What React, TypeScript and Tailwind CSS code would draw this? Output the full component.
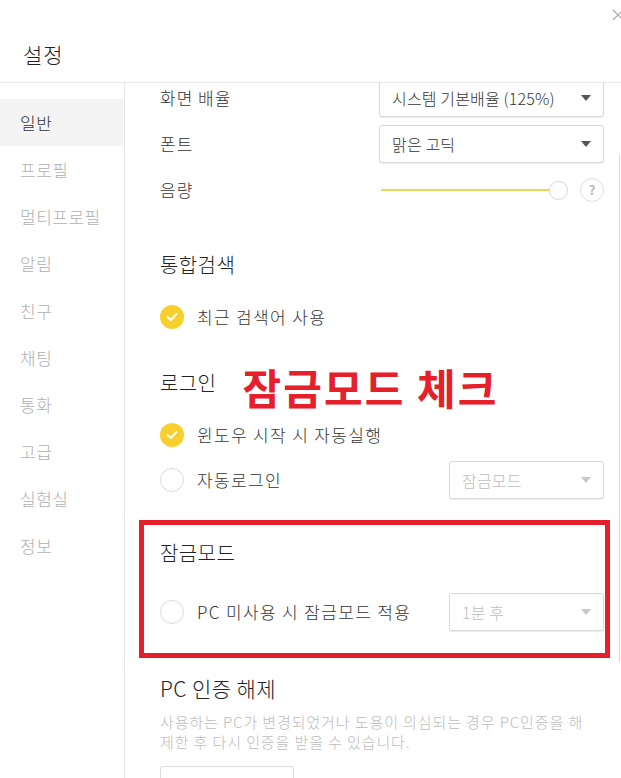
import React from "react";

const menu = ["일반", "프로필", "멀티프로필", "알림", "친구", "채팅", "통화", "고급", "실험실", "정보"];

function Caret({ disabled }: { disabled?: boolean }) {
  return (
    <svg width="10" height="6" viewBox="0 0 10 6" className="shrink-0">
      <path d="M0 0 L10 0 L5 6 Z" fill={disabled ? "#c8c8c8" : "#555"} />
    </svg>
  );
}

function Select({ value, width, disabled }: { value: string; width: string; disabled?: boolean }) {
  return (
    <div
      className={`${width} h-[38px] flex items-center justify-between pl-3 pr-[12px] border border-[#d9d9d9] rounded-[3px] bg-white shadow-[0_1px_1px_rgba(0,0,0,0.08)]`}
    >
      <span className={`text-[16px] font-light tracking-[0.01em] ${disabled ? "text-[#bdbdbd]" : "text-[#333]"}`}>{value}</span>
      <Caret disabled={disabled} />
    </div>
  );
}

function Check({ checked, label }: { checked: boolean; label: string }) {
  return (
    <div className="flex items-center gap-[13px]">
      {checked ? (
        <span className="w-[24px] h-[24px] rounded-full bg-[#f9cf2d] flex items-center justify-center">
          <svg width="12" height="10" viewBox="0 0 12 10">
            <path d="M1.5 5 L4.8 8 L10.5 2" stroke="#fff" strokeWidth="2" fill="none" strokeLinecap="round" strokeLinejoin="round" />
          </svg>
        </span>
      ) : (
        <span className="w-[24px] h-[24px] rounded-full border border-[#dcdcdc] bg-white" />
      )}
      <span className="text-[17px] font-light tracking-[0.08em] text-[#333]">{label}</span>
    </div>
  );
}

export default function App() {
  return (
    <div
      className="relative w-[621px] h-[778px] bg-white overflow-hidden flex flex-col"
      style={{ fontFamily: '"Noto Sans CJK KR", "Noto Sans", sans-serif' }}
    >
      {/* header */}
      <div className="h-[83px] shrink-0 border-b border-[#e6e6e6] flex items-end pb-[14px] pl-[23px]">
        <h1 className="text-[21px] font-light leading-[28px] tracking-[0.04em] text-[#222]">설정</h1>
      </div>
      <svg width="12" height="12" viewBox="0 0 12 12" className="absolute top-[9px] left-[612px]">
        <path d="M1 1 L11 11 M11 1 L1 11" stroke="#a8a8a8" strokeWidth="1.2" />
      </svg>

      <div className="flex flex-1 min-h-0">
        {/* sidebar */}
        <aside className="w-[125px] shrink-0 border-r border-[#e6e6e6] pt-[16px]">
          {menu.map((m, i) => (
            <div
              key={m}
              className={`h-[47px] flex items-center pl-[20px] text-[17px] font-light tracking-[0.03em] ${
                i === 0 ? "bg-[#f4f4f4] text-[#333]" : "text-[#b0b0b0]"
              }`}
            >
              {m}
            </div>
          ))}
        </aside>

        {/* content */}
        <main className="relative flex-1 overflow-hidden pl-[35px] pr-[17px]">
          <div className="-mt-[4px]">
            <div className="h-[38px] flex items-center justify-between">
              <span className="text-[17px] font-light tracking-[0.06em] text-[#333]">화면 배율</span>
              <Select value="시스템 기본배율 (125%)" width="w-[225px]" />
            </div>
            <div className="mt-[8px] h-[38px] flex items-center justify-between">
              <span className="text-[17px] font-light tracking-[0.06em] text-[#333]">폰트</span>
              <Select value="맑은 고딕" width="w-[225px]" />
            </div>
            <div className="mt-[8px] h-[38px] flex items-center justify-between">
              <span className="text-[17px] font-light tracking-[0.06em] text-[#333]">음량</span>
              <div className="w-[223px] flex items-center">
                <div className="flex-1 h-[2px] bg-[#f0d45c]" />
                <span className="w-[19px] h-[19px] rounded-full border border-[#d6d6d6] bg-white" />
                <span className="ml-[12px] w-[24px] h-[24px] rounded-full border border-[#e0e0e0] flex items-center justify-center text-[13px] font-bold text-[#b8b8b8]">
                  ?
                </span>
              </div>
            </div>

            <h2 className="mt-[42px] text-[20px] font-light leading-[28px] tracking-[0.02em] text-[#222]">통합검색</h2>
            <div className="mt-[19px] h-[38px] flex items-center">
              <Check checked label="최근 검색어 사용" />
            </div>

            <div className="mt-[33px] h-[28px] flex items-center">
              <h2 className="text-[20px] font-light leading-[28px] tracking-[0.02em] text-[#222]">로그인</h2>
              <span className="ml-[26px] text-[42px] leading-none font-bold tracking-[0.05em] text-[#e5202b] mt-[8px]">
                잠금모드 체크
              </span>
            </div>
            <div className="mt-[19px] h-[38px] flex items-center">
              <Check checked label="윈도우 시작 시 자동실행" />
            </div>
            <div className="mt-[7px] h-[38px] flex items-center justify-between">
              <Check checked={false} label="자동로그인" />
              <Select value="잠금모드" width="w-[155px]" disabled />
            </div>

            <section className="mt-[21px] -ml-[21px] -mr-[6px] border-[5px] border-[#e5202b] pl-[16px] pr-[1px] pt-[14px] pb-[22px]">
              <h2 className="text-[20px] font-light leading-[28px] tracking-[0.02em] text-[#222]">잠금모드</h2>
              <div className="mt-[26px] h-[38px] flex items-center justify-between">
                <Check checked={false} label="PC 미사용 시 잠금모드 적용" />
                <Select value="1분 후" width="w-[155px]" disabled />
              </div>
            </section>

            <h2 className="mt-[16px] text-[21px] font-light leading-[28px] tracking-[0.02em] text-[#222]">PC 인증 해제</h2>
            <p className="mt-[10px] text-[15px] font-light leading-[20px] tracking-[0.06em] text-[#bcbcbc]">
              사용하는 PC가 변경되었거나 도용이 의심되는 경우 PC인증을 해
              <br />
              제한 후 다시 인증을 받을 수 있습니다.
            </p>
            <button className="mt-[14px] w-[134px] h-[40px] border border-[#dcdcdc] rounded-[3px] bg-white" />
          </div>

          {/* scrollbar edge */}
          <div className="absolute left-[494px] top-[72px] w-px h-[507px] bg-[#d8d8d8]" />
        </main>
      </div>
    </div>
  );
}
